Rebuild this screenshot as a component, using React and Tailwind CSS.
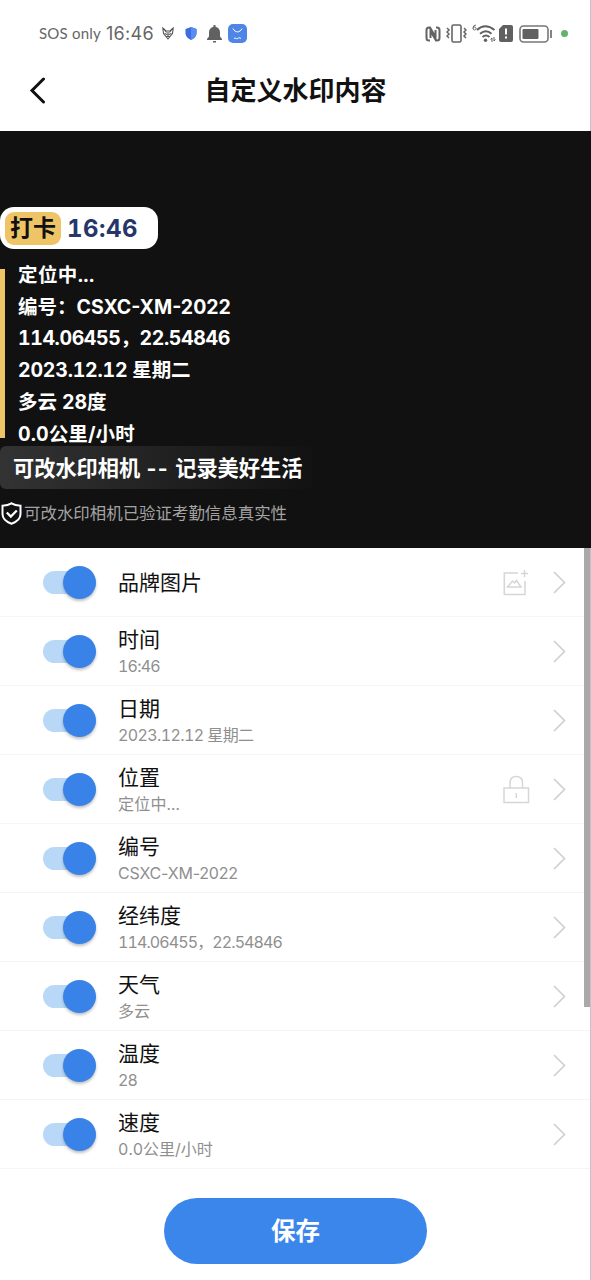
import React from "react";

const watermarkLines = [
  { text: "定位中...", style: "tabular-nums tracking-[0.4px]" },
  { text: "编号：CSXC-XM-2022", style: "tracking-normal" },
  { text: "114.06455，22.54846", style: "tabular-nums tracking-[-0.4px]" },
  { text: "2023.12.12 星期二", style: "tabular-nums tracking-[-0.2px]" },
  { text: "多云 28度", style: "tabular-nums tracking-[-0.1px]" },
  { text: "0.0公里/小时", style: "tabular-nums tracking-[0.1px]" },
];

const items = [
  { title: "品牌图片", icon: "image" },
  { title: "时间", value: "16:46", style: "tabular-nums tracking-[-0.8px]" },
  { title: "日期", value: "2023.12.12 星期二", style: "tabular-nums tracking-[-0.6px]" },
  { title: "位置", value: "定位中...", icon: "lock", style: "tabular-nums tracking-[0.2px]" },
  { title: "编号", value: "CSXC-XM-2022", style: "tracking-[-0.2px]" },
  { title: "经纬度", value: "114.06455，22.54846", style: "tabular-nums tracking-[-0.9px]" },
  { title: "天气", value: "多云", style: "tracking-normal" },
  { title: "温度", value: "28", style: "tabular-nums tracking-[-0.9px]" },
  { title: "速度", value: "0.0公里/小时", style: "tabular-nums tracking-normal" },
];

/* Phone status bar: carrier, clock and notification icons on the left,
 * radio and battery icons on the right.
 */
const StatusBar = () => (
  <div className="flex h-[50px] items-center justify-between pl-[39px] pr-[23px] pt-[17px] text-[#666]">
    <div className="flex items-center">
      <span className="w-[67px] whitespace-nowrap font-['Lato',sans-serif] text-[15px] leading-none tracking-[0.2px]">SOS only</span>
      <span className="w-[56px] whitespace-nowrap text-[18px] leading-none tracking-[0.3px]">16:46</span>
      <svg className="h-[13px] w-[12px]" viewBox="0 0 12 13" fill="none" stroke="#555">
        <path d="M.8 1 1.5 6.5 6 12l4.500-5.500L11.200 1 8 4H4Z" strokeWidth="1.1" />
        <path d="m2 2 2.500 3.500M10 2 7.500 5.500M2.500 6.500l2.700 1M9.500 6.500l-2.700 1M6 5v5M4 9.500h4" strokeWidth="1.100" />
      </svg>
      <svg className="ml-[11px] h-[13px] w-[12px]" viewBox="0 0 13 14">
        <path d="M6.500 0 12.500 2v4.500c0 3.500-2.500 6-6 7.500-3.500-1.500-6-4-6-7.500V2Z" fill="#3d6de0" />
        <path d="M6.500 0 12.500 2v4.500c0 3.500-2.500 6-6 7.500Z" fill="#5d8cf0" />
      </svg>
      <svg className="ml-[10px] h-[18px] w-[15px]" viewBox="0 0 15 18" fill="#616161">
        <path d="M6.500 0h2v1.800c2.800.5 4.500 2.700 4.500 5.500v4.200l2 2.500v1H0v-1l2-2.500V7.300c0-2.800 1.700-5 4.500-5.500ZM6 16h3v1.500H6Z" />
      </svg>
      <svg className="ml-[6px] h-[19px] w-[19px]" viewBox="0 0 19 19" fill="none" stroke="#fff">
        <rect width="19" height="19" rx="5" fill="#4f86e6" stroke="none" />
        <path d="M5 4.500c2 4.500 7 4.500 9 0" strokeWidth="1" />
        <path d="M6 14.500c1.500-1.500 2 1 3.500 0s2-1 3.500 0" strokeWidth="1" />
      </svg>
    </div>
    <div className="flex items-center">
      <svg className="-ml-px h-[16px] w-[16px]" viewBox="0 0 16 16" fill="none" stroke="#636363" strokeWidth="2">
        <path d="M5 14.500H4Q1.500 14.500 1.500 12V4Q1.500 1.500 4 1.500h1L10.500 11V4" />
        <path d="M11 1.500h1Q14.500 1.500 14.500 4v8q0 2.500-2.500 2.500h-1L5.500 5v7" />
      </svg>
      <svg className="ml-[5px] h-[19px] w-[21px]" viewBox="0 0 21 19" fill="none" stroke="#666">
        <rect x="6" y="1" width="9" height="17" rx="1.500" strokeWidth="1.600" />
        <path d="m1 4 2 2-2 2 2 2-2 2 2 2M18 4l2 2-2 2 2 2-2 2 2 2" strokeWidth="1.500" />
      </svg>
      <svg className="ml-[5px] h-[19px] w-[24px]" viewBox="0 0 24 19" fill="none" stroke="#606060">
        <path d="M4 1Q1 1 1 4.200 1 6 2.500 6T4 4.500 2.500 3 1 4.500" strokeWidth=".9" />
        <path d="M5 6q8-7.500 17.500 0M8 9.800q6-5 11.500 0M10.500 13q3.500-3 7 0" strokeWidth="2" />
        <circle cx="13.500" cy="16.300" r="1.700" fill="#606060" stroke="none" />
        <path d="m18.500 15.500 1.500-1.500v4M22 13v4l1.500-1.500" strokeWidth="1" />
      </svg>
      <svg className="ml-[3px] h-[17px] w-[14px]" viewBox="0 0 14 17">
        <path d="M4 0h8q2 0 2 2v13q0 2-2 2H2q-2 0-2-2V4Z" fill="#606060" />
        <path d="M7 3.500v6M7 11.500v2" stroke="#fff" strokeWidth="2" />
      </svg>
      <svg className="ml-[6px] h-[18px] w-[34px]" viewBox="0 0 34 18">
        <rect x="1" y="1" width="28" height="16" rx="3.500" fill="none" stroke="#777" strokeWidth="1.600" />
        <rect x="3.500" y="4" width="16" height="10" rx="1" fill="#606060" />
        <path d="M32 5v8" stroke="#777" strokeWidth="1.800" />
      </svg>
      <span className="ml-[8px] h-[7px] w-[7px] rounded-full bg-[#62b36d]" />
    </div>
  </div>
);

/* Always-on switch with an overhanging thumb */
const Toggle = () => (
  <div className="flex h-[23px] w-[53px] items-center justify-end rounded-full bg-[#b9d8f8]">
    <div className="h-[33px] w-[33px] shrink-0 rounded-full bg-[#3983e8] shadow-[0_2px_3px_rgba(0,0,0,0.25)]" />
  </div>
);

const RowIcon = ({ name }) => {
  if (name === "image") {
    return (
      <svg className="h-[27px] w-[27px]" viewBox="0 0 27 27" fill="none" stroke="#d6d6d6" strokeWidth="1.500">
        <path d="M15 4H1.300v21.500H22V12M21.500 1v7M18 4.500h7M4.500 18l5-6 2 2 2-2.500 4.500 6.500Z" />
      </svg>
    );
  }
  if (name === "lock") {
    return (
      <svg className="h-[29px] w-[27px]" viewBox="0 0 27 29" fill="none" stroke="#d6d6d6" strokeWidth="1.500">
        <path d="M1 13h24.500v14.500H1ZM7 13V8q0-6.500 6.300-6.500t6.200 6.500v5M13.300 18v5" />
      </svg>
    );
  }
  return null;
};

const ItemRow = ({ item }) => (
  <div className="flex h-[69px] items-center border-b border-[#f5f5f5] pl-[43px] pr-[25px]">
    <Toggle />
    <div className="ml-[22px] flex flex-1 flex-col pt-px">
      <span className="text-[21px] leading-[28px] text-[#111]">{item.title}</span>
      {item.value && (
        <span className={`-mb-px text-[16px] leading-[24px] text-[#8f8f8f] ${item.style}`}>{item.value}</span>
      )}
    </div>
    <RowIcon name={item.icon} />
    <svg className="ml-[23px] h-[24px] w-[13px]" viewBox="0 0 13 24" fill="none" stroke="#d0d0d0" strokeWidth="1.700">
      <path d="m1 2 10.500 10.500L1 23" />
    </svg>
  </div>
);

const WatermarkPreview = () => (
  <div className="h-[417px] bg-[#111] pt-[76px] font-bold text-white">
    <div className="flex h-[42px] w-[158px] items-center rounded-[14px] bg-white pl-[5px]">
      <span className="flex h-[33px] w-[56px] items-center justify-center rounded-[9px] bg-[#eec466] text-[23px] text-[#111]">打卡</span>
      <span className="ml-[6px] pt-[1px] text-[24px] tracking-[0.5px] tabular-nums text-[#26366b]">16:46</span>
    </div>
    <div className="mt-[10px] flex items-center">
      <div className="-mt-[2px] h-[169px] w-[5px] bg-[#eec466]" />
      <div className="ml-[13px] pt-[1px]">
        {watermarkLines.map((line) => (
          <p key={line.text} className={`whitespace-nowrap text-[19.500px] leading-[31.700px] ${line.style}`}>
            {line.text}
          </p>
        ))}
      </div>
    </div>
    <div className="-mt-[4px] flex h-[43px] w-[320px] items-center rounded-[6px] bg-linear-to-r from-[#333] to-[#111] pl-[13px] text-[21.200px]">
      <span className="whitespace-nowrap pt-[2px]">
        可改水印相机<span className="tracking-[1.300px]"> -- </span>记录美好生活
      </span>
    </div>
    <div className="mt-[12px] flex h-[24px] items-center font-normal">
      <svg className="ml-[1px] h-[23px] w-[21px]" viewBox="0 0 21 23" fill="none" stroke="#fff" strokeWidth="2">
        <path d="M10.500 1.300Q14 3.500 19.500 3.700V12q0 6.500-9 9.700-9-3.200-9-9.700V3.700Q7 3.500 10.500 1.300Z" />
        <path d="m5.800 10.500 4 4 6-6" strokeWidth="2.300" />
      </svg>
      <span className="ml-[2px] text-[16.450px] text-[#a3a3a3]">可改水印相机已验证考勤信息真实性</span>
    </div>
  </div>
);

const App = () => {
  return (
    <div className="relative h-[1280px] w-full overflow-hidden bg-white font-['Inter','Noto_Sans_CJK_SC',sans-serif]">
      <StatusBar />
      <header className="relative flex h-[81px] items-center justify-center">
        <svg className="absolute left-[29px] h-[27px] w-[16px]" viewBox="0 0 16 27" fill="none" stroke="#111" strokeWidth="3">
          <path d="M14.500 2 3 13.500 14.500 25" strokeLinecap="round" />
        </svg>
        <h1 className="text-[26px] font-bold text-[#111]">自定义水印内容</h1>
      </header>
      <WatermarkPreview />
      <main>
        {items.map((item) => (
          <ItemRow key={item.title} item={item} />
        ))}
      </main>
      <div className="flex justify-center pt-[29px]">
        <button type="button" className="h-[66px] w-[263px] rounded-full bg-[#3b86ea] text-[24.500px] font-bold text-white">
          保存
        </button>
      </div>
      {/* scrollbar over the list and the thin window edge */}
      <div className="absolute right-0 top-[548px] h-[459px] w-[7px] bg-[#a9a9a9]" />
      <div className="absolute right-0 top-0 h-[131px] w-px bg-[#c4c4c4]" />
      <div className="absolute bottom-0 right-0 h-[732px] w-px bg-[#c4c4c4]" />
    </div>
  );
};

export default App;
